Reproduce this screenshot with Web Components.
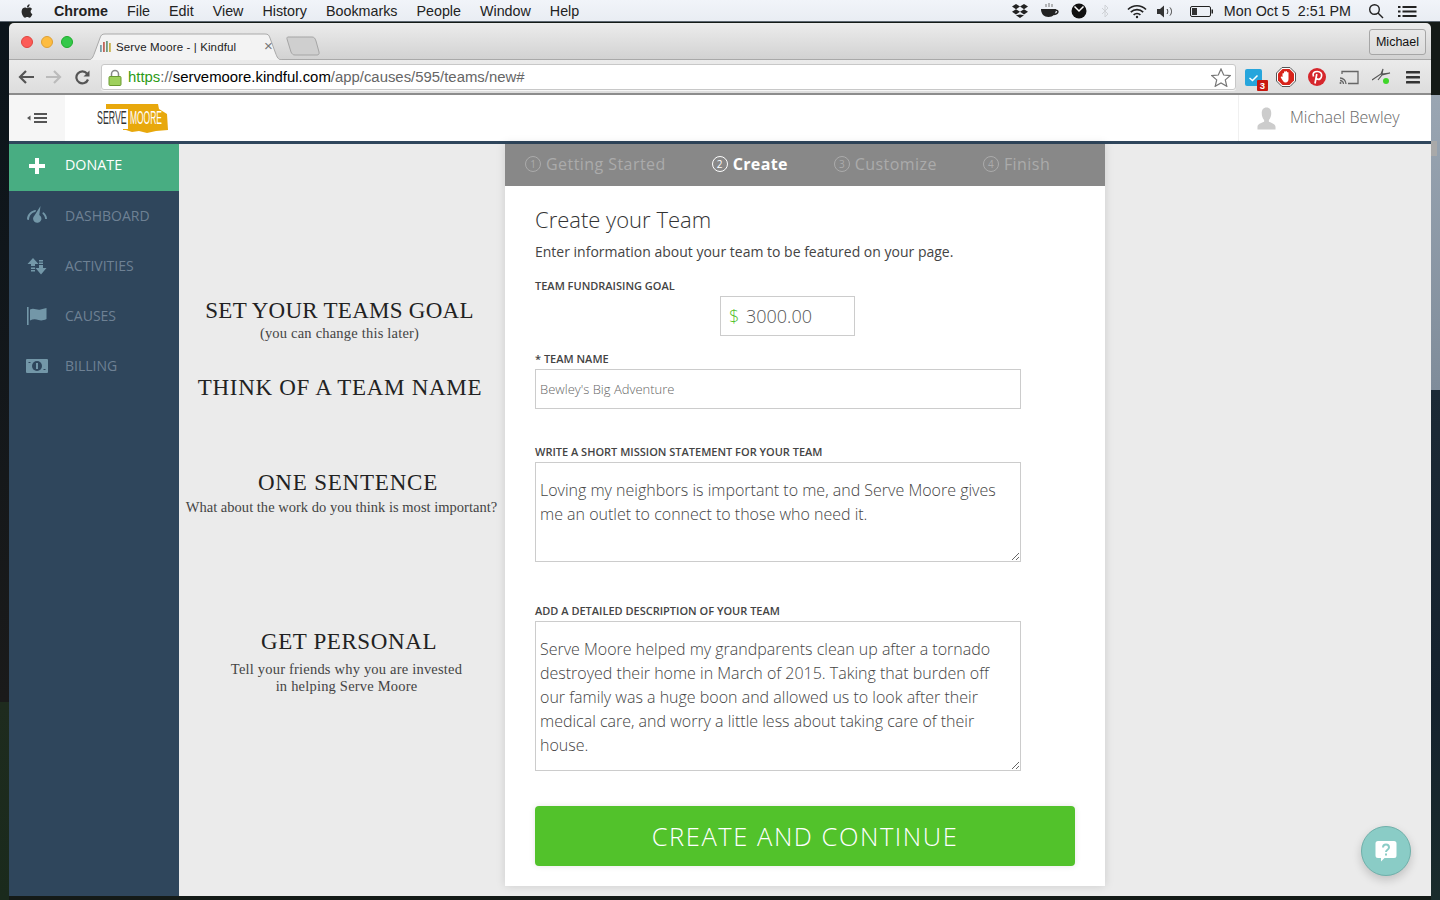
<!DOCTYPE html>
<html lang="en"><head><meta charset="utf-8"><title>Serve Moore - | Kindful</title>
<style>
html,body{margin:0;padding:0;height:900px;overflow:hidden}
body{font-family:"Open Sans",sans-serif;display:flex;flex-direction:column;
background:
 linear-gradient(#a9a9a9,#a9a9a9) 1431px 141px/6px 15px no-repeat,
 linear-gradient(#9aa6b3,#7f8c9a) 1431px 95px/9px 295px no-repeat,
 linear-gradient(#1c2a36,#15222e 60%,#1a2c2c) 1431px 390px/9px 510px no-repeat,
 linear-gradient(#0b141b,#1a1a1a) 0 22px/9px 680px no-repeat,
 linear-gradient(#1e2b1e,#1a2a1c) 0 702px/9px 198px no-repeat,
 #141a17}
</style></head><body>
<template id="t-menubar"><style>
:host{display:flex;align-items:center;height:22px;flex:none;padding:1px 23px 0 19px;box-sizing:border-box;
 background:linear-gradient(#f1f4f9,#e9edf3);border-bottom:1px solid #5c6670;font:14.300px/20px "Liberation Sans",sans-serif;color:#222}
.l{display:flex;align-items:center;gap:19px}
.apple{display:flex}
b{font-weight:700}
.r{margin-left:auto;display:flex;align-items:center}
svg{display:block}
</style>
<div class="l"><span class="apple"><svg width="16" height="16" viewBox="0 0 24 24" fill="#2a2a2a"><path d="M18.710 19.500c-.83 1.240-1.710 2.450-3.050 2.470-1.340.03-1.770-.79-3.290-.79-1.530 0-2 .77-3.270.82-1.310.05-2.300-1.320-3.140-2.530C4.250 17 2.940 12.450 4.700 9.390c.87-1.520 2.430-2.480 4.120-2.510 1.280-.02 2.500.87 3.290.87.78 0 2.260-1.070 3.810-.91.65.03 2.470.26 3.640 1.980-.09.06-2.170 1.280-2.150 3.810.03 3.020 2.650 4.030 2.680 4.040-.03.07-.42 1.440-1.380 2.830M13 3.500c.73-.83 1.940-1.460 2.940-1.500.13 1.170-.34 2.350-1.040 3.190-.69.85-1.830 1.510-2.950 1.420-.15-1.150.41-2.350 1.050-3.110z"/></svg></span>
<b>Chrome</b><span>File</span><span>Edit</span><span>View</span><span>History</span><span>Bookmarks</span><span>People</span><span>Window</span><span>Help</span></div>
<div class="r">
<svg width="18" height="16" viewBox="0 0 18 16" fill="#222" style="margin-right:11px"><path d="M5 1 1 3.600l4 2.600 4-2.600zM13 1 9 3.600l4 2.600 4-2.600zM1 8.800l4 2.600 4-2.600-4-2.600zM13 6.200l-4 2.600 4 2.600 4-2.600zM5 12.300l4 2.700 4-2.700-4-.9-4 .9z"/></svg>
<svg width="20" height="16" viewBox="0 0 20 16" fill="#222" style="margin-right:11px"><path d="M1 6h15c0 5-3 8-7.500 8S1 11 1 6z"/><path d="M15.500 7.500c3 -1 4 3-1.500 4" fill="none" stroke="#222" stroke-width="1.500"/><path d="M6 1v3M9 0v4M12 1v3" stroke="#777"/></svg>
<svg width="16" height="16" viewBox="0 0 16 16" style="margin-right:14px"><circle cx="8" cy="8" r="7.500" fill="#111"/><path d="M3.500 3.500 8 8l4.500-4.500" fill="none" stroke="#fff" stroke-width="1.500"/></svg>
<svg width="8" height="14" viewBox="0 0 8 14" fill="none" stroke="#cfd2d6" style="margin-right:18px"><path d="M1 4l6 6-3 3V1l3 3-6 6"/></svg>
<svg width="20" height="15" viewBox="0 0 20 15" fill="none" stroke="#222" stroke-width="1.700" style="margin-right:10px"><path d="M1 5.500c5-5 13-5 18 0M3.800 8.200c3.500-3.400 8.900-3.400 12.400 0M6.600 10.900c1.900-1.800 4.900-1.800 6.800 0"/><circle cx="10" cy="13" r="1.200" fill="#222" stroke="none"/></svg>
<svg width="17" height="13" viewBox="0 0 17 13" style="margin-right:16px"><path d="M0 4h3l4-3.500v12L3 9H0z" fill="#333"/><path d="M10 4c1 1.500 1 3.500 0 5M13 2.500c2 2.500 2 5.500 0 8" fill="none" stroke="#333"/></svg>
<svg width="24" height="11" viewBox="0 0 24 11" style="margin-right:10px"><rect x=".5" y=".5" width="20" height="10" rx="1.500" fill="none" stroke="#222"/><rect x="2" y="2" width="5" height="7" fill="#333"/><rect x="21.500" y="3.500" width="1.500" height="4" fill="#222"/></svg>
<span>Mon Oct 5&nbsp;&nbsp;2:51 PM</span>
<svg width="16" height="16" viewBox="0 0 16 16" fill="none" stroke="#222" stroke-width="1.400" style="margin:0 14px 0 17px"><circle cx="6.500" cy="6.500" r="4.800"/><path d="M10 10l5 5"/></svg>
<svg width="19" height="11" viewBox="0 0 19 11" fill="#222"><rect width="2.500" height="2"/><rect x="4.500" width="14" height="2"/><rect y="4.500" width="2.500" height="2"/><rect x="4.500" y="4.500" width="14" height="2"/><rect y="9" width="2.500" height="2"/><rect x="4.500" y="9" width="14" height="2"/></svg>
</div></template>

<template id="t-browser"><style>
:host{display:block;flex:none;font-family:"Liberation Sans",sans-serif}
.title{height:37px;box-sizing:border-box;background:linear-gradient(#ececec,#d2d2d2);border-bottom:1px solid #a9a9a9;display:flex;align-items:flex-end;position:relative;border-radius:5px 5px 0 0}
.lights{display:flex;gap:8px;padding:0 0 11px 12px;width:78px;box-sizing:border-box}
.lights i{width:12px;height:12px;border-radius:50%;display:block}
.tab{width:198px;height:27px;position:relative;margin-bottom:-1px;font-size:11.500px;letter-spacing:.12px;color:#222;display:flex;align-items:center;flex:none}
.tab svg.bg{position:absolute;inset:0}
.tab span,.tab .fav,.tab .x{position:relative}
.tab .fav{margin:0 4px 0 13px}
.tab .x{position:absolute;right:12px;top:4px;font-size:15px;color:#777}
.new{margin:0 0 3px 1px;flex:none;display:block}
.prof{margin:0 5px 4px auto;width:57px;height:26px;box-sizing:border-box;border:1px solid #a6a6a6;border-radius:3px;font-size:12.500px;line-height:25px;text-align:center;color:#111;background:linear-gradient(#e9e9e9,#dcdcdc)}
.bar{height:35px;box-sizing:border-box;background:linear-gradient(#ebebeb,#dddddd);border-bottom:2px solid #8c8c8c;display:flex;align-items:center;padding:1px 10px 0 9px}
.nav{display:flex;align-items:center;width:83px;flex:none}
.url{width:1135px;flex:none;height:26px;box-sizing:border-box;background:#fff;border:1px solid #c8c8c8;border-radius:3px;display:flex;align-items:center;padding:0 4px 0 6px;font-size:14.900px;color:#666;box-shadow:0 1px 0 #f5f5f5}
.url svg.lock{margin-right:6px}
.url .g{color:#2b9a16}.url .k{color:#000}
.url .star{margin-left:auto}
.ext{display:flex;align-items:center;flex:1;position:relative;height:30px}
svg{display:block;flex:none}
.badge{position:absolute;left:21px;top:18px;width:11px;height:11px;background:#c8170f;border-radius:1px;color:#fff;font:700 9.500px/11px "Liberation Sans",sans-serif;text-align:center}
</style>
<div class="title">
 <div class="lights"><i style="background:#fc5b57;border:.5px solid #e0443e;box-sizing:border-box"></i><i style="background:#fdbc40;box-sizing:border-box;border:.5px solid #dea034"></i><i style="background:#34c84a;box-sizing:border-box;border:.5px solid #1dad2b"></i></div>
 <div class="tab"><svg class="bg" width="198" height="27" viewBox="0 0 198 27"><path d="M.5 27C5 27 6 24 7.500 20L13 5C14 2 15 1 18 1H178c3 0 4 1 5 4l5.500 15c1.500 4 2.500 7 7 7" fill="#f3f3f3" stroke="#aaa"/></svg>
  <svg class="fav" width="12" height="11" viewBox="0 0 12 11"><rect y="4" width="1.800" height="7" fill="#7aa0a8"/><rect x="3" y="1" width="1.800" height="10" fill="#c0665a"/><rect x="6" y="0" width="1.800" height="11" fill="#6f9a80"/><rect x="9" y="2" width="1.800" height="9" fill="#c9b14d"/></svg>
  <span>Serve Moore - | Kindful</span><span class="x">×</span></div>
 <svg class="new" width="34" height="20" viewBox="0 0 34 20"><path d="M2 1h24c2 0 3 1 4 4l3 11c.5 2-.5 3-2 3H9c-2 0-3-1-4-3L1 3C.7 2 1 1 2 1z" fill="#cfcfcf" stroke="#a5a5a5"/></svg>
 <div class="prof">Michael</div>
</div>
<div class="bar">
 <div class="nav">
  <svg width="16" height="14" viewBox="0 0 16 14" fill="none" stroke="#555" stroke-width="2.200" style="margin-right:12px"><path d="M16 7H2M8 1 2 7l6 6"/></svg>
  <svg width="16" height="14" viewBox="0 0 16 14" fill="none" stroke="#bbb" stroke-width="2.200" style="margin-right:13px"><path d="M0 7h14M8 1l6 6-6 6"/></svg>
  <svg width="15" height="15" viewBox="0 0 15 15" fill="none" stroke="#555" stroke-width="2.200"><path d="M13 9.500A6 6 0 1 1 12 3.500"/><path d="M14.500 .5v6h-6z" fill="#555" stroke="none"/></svg>
 </div>
 <div class="url">
  <svg class="lock" width="14" height="17" viewBox="0 0 14 17"><path d="M3.500 8V5a3.500 3.500 0 0 1 7 0v3" fill="none" stroke="#888" stroke-width="1.500"/><rect x="1" y="7.500" width="12" height="9" rx="1" fill="#9ed05c" stroke="#6a9a30"/></svg>
  <span><span class="g">https</span>://<span class="k">servemoore.kindful.com</span>/app/causes/595/teams/new#</span>
  <svg class="star" width="20" height="19" viewBox="0 0 20 19" fill="#fff" stroke="#777" stroke-width="1.200"><path d="m10 1 2.700 6 6.500.6-4.900 4.300 1.500 6.400-5.800-3.400-5.800 3.400 1.500-6.400L.8 7.600 7.300 7z"/></svg>
 </div>
 <div class="ext">
  <svg width="17" height="17" viewBox="0 0 17 17" style="margin:0 0 0 9px"><rect width="17" height="17" rx="2" fill="#26a5dc"/><path d="M4.500 9l3 2.500 5-5" fill="none" stroke="#fff" stroke-width="1.500"/></svg>
  <span class="badge">3</span>
  <svg width="20" height="20" viewBox="0 0 20 20" style="margin-left:14px"><path d="M6 .5h8L19.500 6v8L14 19.500H6L.5 14V6z" fill="#fff" stroke="#555"/><path d="M6.500 2h7L18 6.500v7L13.500 18h-7L2 13.500v-7z" fill="#d8231a"/><path d="M6.500 11V6.500a1 1 0 0 1 1.500 0V9 4.800a1 1 0 0 1 1.500 0V9 4.500a1 1 0 0 1 1.500 0V9 5.500a1 1 0 0 1 1.500 0V12c0 2-1 3.500-3 3.500S7 14 6 12.500L4.800 10.500c-.4-1 .8-1.500 1.700-.5z" fill="#fff"/></svg>
  <svg width="18" height="18" viewBox="0 0 18 18" style="margin-left:12px"><circle cx="9" cy="9" r="9" fill="#d6262c"/><path d="M5.500 8.500C4 5 6.500 3.500 9.300 3.500c3 0 4.700 1.800 4.300 4.500-.4 2.500-2.200 3.700-3.700 3.300-1-.3-1.400-1-1.400-1M8.800 6 7 15.500" fill="none" stroke="#fff" stroke-width="1.700"/></svg>
  <svg width="20" height="15" viewBox="0 0 20 15" fill="none" stroke="#666" stroke-width="1.300" style="margin-left:13px"><path d="M3 4V1.500h16v12H9"/><path d="M1 8a6 6 0 0 1 6 6M1 10.500A3.500 3.500 0 0 1 4.500 14"/><circle cx="1.500" cy="13" r="1" fill="#666" stroke="none"/></svg>
  <svg width="20" height="18" viewBox="0 0 20 18" style="margin-left:13px"><path d="M0 12 9 6l2-5-1 5 8-1-8 2-4 5" fill="none" stroke="#555" stroke-width="1.100"/><circle cx="14" cy="13" r="3" fill="#3fd62a"/></svg>
  <svg width="14" height="13" viewBox="0 0 14 13" fill="#333" style="margin-left:14px"><rect width="14" height="2.600" rx=".5"/><rect y="5" width="14" height="2.600" rx=".5"/><rect y="10" width="14" height="2.600" rx=".5"/></svg>
 </div>
</div></template>

<template id="t-apphead"><style>
:host{display:flex;height:49px;flex:none;box-sizing:border-box;background:#fff;border-bottom:3px solid #2f465c;font-family:"Open Sans",sans-serif}
.tog{width:56px;background:#f6f6f6;display:flex;align-items:center;justify-content:center}
.logo{margin-left:32px;display:flex;align-items:center}
.user{margin-left:auto;border-left:1px solid #f0f0f0;width:193px;box-sizing:border-box;display:flex;align-items:center;padding-left:18px;font-weight:300;font-size:16px;color:#666}
.user svg{margin-right:14px}
.user span{padding-bottom:2px}
</style>
<div class="tog"><svg width="20" height="10" viewBox="0 0 20 10" fill="#555"><path d="M0 5l3.500-2.500v5z"/><rect x="7" width="13" height="2"/><rect x="7" y="4" width="13" height="2"/><rect x="7" y="8" width="13" height="2"/></svg></div>
<div class="logo"><svg width="72" height="31" viewBox="0 0 72 31"><path d="M9 1h52l1 5 8 5 1 16-12 1-9 2-8-2-7 1-6-2-3 0V9H9z" fill="#e8a80c"/><rect y="6" width="31" height="20" fill="#fff"/><text transform="translate(0 21) scale(.49 1)" font-family="Liberation Sans,sans-serif" font-size="18" fill="#333">SERVE</text><text transform="translate(33 21) scale(.47 1)" font-family="Liberation Sans,sans-serif" font-size="18" fill="#fff">MOORE</text></svg></div>
<div class="user"><svg width="19" height="23" viewBox="0 0 20 23" fill="#ccc"><path d="M10 0c3.500 0 5 2.500 5 6 0 3-1 5.500-2.500 7v2c2 1 7 2 7 5.500V23H.5v-2.500C.5 17 5.500 16 7.500 15v-2C6 11.500 5 9 5 6c0-3.500 1.500-6 5-6z"/></svg><span>Michael Bewley</span></div>
</template>

<template id="t-navitem"><style>
:host{display:flex;align-items:center;height:50px;box-sizing:border-box;padding-left:16px;color:#6e8194;font:400 14px "Open Sans",sans-serif;text-transform:uppercase}
:host([primary]){height:47px;background:#48ad82;color:#fff;font-size:14.300px;padding-bottom:4px}
.i{width:24px;height:24px;margin-right:16px;display:flex;align-items:center;justify-content:center;flex:none}
.t{padding-bottom:2px}
</style><span class="i"><slot name="icon"></slot></span><span class="t"><slot></slot></span></template>

<template id="t-sidenav"><style>
:host{display:block;width:170px;flex:none;background:#2f465c}
</style><slot></slot></template>

<template id="t-tip"><style>
:host{display:block;text-align:center;font-family:"Liberation Serif",serif;color:#222;padding:var(--pad,0);margin-top:var(--top,0)}
h3{margin:0;font-weight:400;font-size:23px;line-height:30px;letter-spacing:var(--ls,.6px);white-space:nowrap}
p{margin:var(--gap,0) 0 0 var(--shift,0);font-size:14.500px;line-height:17px;color:#444;letter-spacing:var(--pls,.2px);white-space:nowrap}
</style><h3><slot name="head"></slot></h3><p><slot></slot></p></template>

<template id="t-steps"><style>
:host{display:flex;height:42px;flex:none;box-sizing:border-box;background:#888;padding:0 0 3px 20px;gap:46px;align-items:center;font:400 16px "Open Sans",sans-serif;color:#ababab;letter-spacing:.44px}
span{display:flex;align-items:center;white-space:nowrap}
i{font:normal 10px/14px "Open Sans",sans-serif;margin-right:5px;letter-spacing:0;width:14px;height:14px;border:1px solid currentColor;border-radius:50%;text-align:center;display:block;margin-top:1px}
.on{color:#fff;font-weight:700;letter-spacing:.35px}
</style><span><i>1</i>Getting Started</span><span class="on"><i>2</i>Create</span><span><i>3</i>Customize</span><span><i>4</i>Finish</span></template>

<template id="t-field"><style>
:host{display:block;margin-top:var(--top,0)}
label{display:block;font:600 11px/14px "Open Sans",sans-serif;color:#444;text-transform:uppercase;margin-bottom:3px}
.box{box-sizing:border-box;width:486px;height:var(--h,40px);border:1px solid #ccc;display:flex;align-items:center;padding-left:4px;font:300 13px "Open Sans",sans-serif;color:#666;background:#fff}
</style><label><slot name="label"></slot></label><div class="box"><slot></slot></div></template>

<template id="t-area"><style>
:host{display:block;margin-top:var(--top,0)}
label{display:block;font:600 11px/14px "Open Sans",sans-serif;color:#444;text-transform:uppercase;margin-bottom:3px}
textarea{display:block;box-sizing:border-box;width:486px;height:var(--h,100px);border:1px solid #ccc;padding:15px 4px 0;margin:0;font:300 16px/24px "Open Sans",sans-serif;color:#444;border-radius:0;outline:0;background:#fff;overflow:hidden}
</style><label></label><textarea></textarea></template>

<template id="t-goal"><style>
:host{display:block}
label{display:block;font:600 11px/14px "Open Sans",sans-serif;color:#444;text-transform:uppercase}
.box{box-sizing:border-box;margin:3px 0 0 185px;width:135px;height:40px;border:1px solid #ccc;display:flex;align-items:center;padding-left:8px;font:300 18px "Open Sans",sans-serif;color:#555}
b{font-weight:300;color:#52c22b;width:17px;flex:none}
</style><label>Team Fundraising Goal</label><div class="box"><b>$</b>3000.00</div></template>

<template id="t-card"><style>
:host{display:flex;flex-direction:column;width:600px;height:742px;flex:none;background:#fff;box-shadow:0 0 9px rgba(0,0,0,.13);font-family:"Open Sans",sans-serif}
.body{padding:17px 30px 0}
h2{margin:0;font-weight:300;font-size:22px;line-height:32px;color:#333}
p{margin:7px 0 0;font-size:14px;line-height:20px;color:#444}
.btn{margin-top:35px;height:60px;width:540px;border-radius:4px;background:#52c22b;color:#fff;font:300 25.500px/60px "Open Sans",sans-serif;text-align:center;letter-spacing:1.550px;box-shadow:0 0 6px rgba(0,0,0,.1)}
.goal{display:block;margin-top:17px}
</style><wizard-steps></wizard-steps><div class="body"><h2>Create your Team</h2><p>Enter information about your team to be featured on your page.</p>
<goal-field class="goal"></goal-field>
<text-field style="--top:16px"><span slot="label">* Team Name</span>Bewley's Big Adventure</text-field>
<area-field style="--top:36px;--h:100px" label="Write a short mission statement for your team">Loving my neighbors is important to me, and Serve Moore gives me an outlet to connect to those who need it.</area-field>
<area-field style="--top:42px;--h:150px" label="Add a detailed description of your team">Serve Moore helped my grandparents clean up after a tornado destroyed their home in March of 2015. Taking that burden off our family was a huge boon and allowed us to look after their medical care, and worry a little less about taking care of their house.</area-field>
<div class="btn">CREATE AND CONTINUE</div></div></template>

<template id="t-fab"><style>
:host{position:absolute;right:20px;bottom:20px;width:50px;height:50px;box-sizing:border-box;border-radius:50%;background:#8accc6;border:1px solid #6fb0aa;box-shadow:0 4px 10px rgba(0,0,0,.18);display:flex;align-items:center;justify-content:center}
svg{display:block}
</style><svg width="22" height="22" viewBox="0 0 22 22"><path d="M3 1h16a2.500 2.500 0 0 1 2.500 2.500v12A2.500 2.500 0 0 1 19 18H9.500L6 21.500V18H3A2.500 2.500 0 0 1 .5 15.500v-12A2.500 2.500 0 0 1 3 1z" fill="#fff"/><path d="M8 7.500c0-4 6-4 6 0 0 2.300-3 2.300-3 4.500" fill="none" stroke="#8accc6" stroke-width="2"/><rect x="10" y="13.500" width="2" height="2" fill="#8accc6"/></svg></template>

<mac-menubar></mac-menubar>
<browser-window style="display:flex;flex-direction:column;margin:1px 9px 0;height:873px;position:relative;flex:none">
 <browser-chrome></browser-chrome>
 <app-header></app-header>
 <app-main style="display:flex;flex:1;min-height:0;background:#ebebeb;position:relative">
  <side-nav>
   <side-item primary><svg slot="icon" width="16" height="16" viewBox="0 0 16 16" fill="#fff"><path d="M6 0h4v6h6v4h-6v6H6v-6H0V6h6z"/></svg>Donate</side-item>
   <side-item><svg slot="icon" width="22" height="20" viewBox="0 0 22 20" fill="#7397a8"><path d="M1 13.500C1 8 5 4.500 10 4l-.6 2C6 6.500 3 9.500 3 14zM21 13c0-3-1.500-5.500-4-7l-.6 1.800c1.600 1.200 2.600 3 2.800 5.200z"/><path d="M14.500 0l-1.200 9a4.200 4.200 0 1 1-4.800.5z"/></svg>Dashboard</side-item>
   <side-item><svg slot="icon" width="20" height="17" viewBox="0 0 20 17" fill="#7397a8"><path d="M6 0l5.500 6H8v2H4V6H.5zM4 9.500h4v1.500H4zM4 12h4v1.500H4zM12 2h4v1.500h-4zM12 4.500h4V6h-4zM12 7h4v3h3.500L14 16.500 8.500 10H12z"/></svg>Activities</side-item>
   <side-item><svg slot="icon" width="20" height="18" viewBox="0 0 20 18" fill="#7397a8"><rect y="0" width="1.600" height="18"/><path d="M3 2.500c4-2 7 1 10.500 0 2-.5 4-.8 6-1.500v11c-3 1.500-5.500 1.800-8 1C8.500 12 6 12 3 13.500z"/></svg>Causes</side-item>
   <side-item><svg slot="icon" width="22" height="14" viewBox="0 0 22 14"><rect width="22" height="14" rx="1" fill="#7397a8"/><circle cx="11" cy="7" r="5" fill="#2f465c"/><rect x="10" y="4" width="2" height="6" fill="#7397a8"/><path d="M2.500 3.500h2M17.500 10.500h2" stroke="#2f465c"/></svg>Billing</side-item>
  </side-nav>
  <tip-col style="display:block;width:326px;flex:none;padding-top:152px;box-sizing:border-box">
   <tip-block style="--pad:0 5px 0 0;--ls:.26px;--gap:-1px"><span slot="head">SET YOUR TEAMS GOAL</span>(you can change this later)</tip-block>
   <tip-block style="--top:31px;--pad:0 4px 0 0;--ls:.7px"><span slot="head">THINK OF A TEAM NAME</span></tip-block>
   <tip-block style="--top:65px;--pad:0 0 0 12px;--gap:1px;--ls:.8px;--shift:-13px;--pls:.02px"><span slot="head">ONE SENTENCE</span>What about the work do you think is most important?</tip-block>
   <tip-block style="--top:111px;--pad:0 0 0 14px;--gap:4px;--ls:.6px;--shift:-5px"><span slot="head">GET PERSONAL</span>Tell your friends why you are invested<br>in helping Serve Moore</tip-block>
  </tip-col>
  <team-card></team-card>
  <help-fab></help-fab>
 </app-main>
</browser-window>
<script>
function reg(name,tpl,init){customElements.define(name,class extends HTMLElement{
 constructor(){super();const s=this.attachShadow({mode:'open'});s.appendChild(document.getElementById(tpl).content.cloneNode(true));}
 connectedCallback(){if(init)init(this,this.shadowRoot);}
});}
reg('mac-menubar','t-menubar');
reg('browser-chrome','t-browser');
reg('app-header','t-apphead');
reg('side-item','t-navitem');
reg('side-nav','t-sidenav');
reg('tip-block','t-tip');
reg('wizard-steps','t-steps');
reg('text-field','t-field');
reg('goal-field','t-goal');
reg('area-field','t-area',(h,s)=>{s.querySelector('label').textContent=h.getAttribute('label');s.querySelector('textarea').textContent=h.textContent;});
reg('team-card','t-card');
reg('help-fab','t-fab');
for(const n of ['browser-window','app-main','tip-col'])customElements.define(n,class extends HTMLElement{constructor(){super();this.attachShadow({mode:'open'}).innerHTML='<slot></slot>';}});
</script>
</body></html>
